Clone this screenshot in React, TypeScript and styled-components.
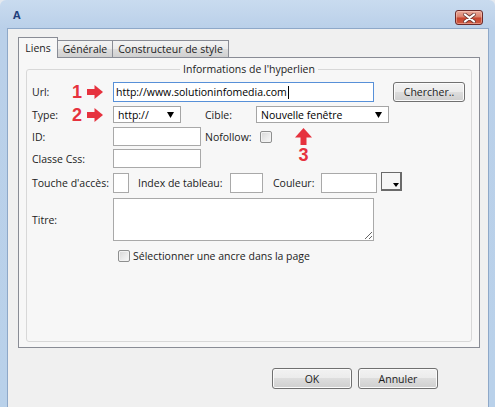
import React from "react";
import styled, { createGlobalStyle, css } from "styled-components";

const GlobalStyle = createGlobalStyle`
  *, *::before, *::after { box-sizing: border-box; }
  html, body { margin: 0; padding: 0; background: #e4e9ef; }
  body {
    font-family: "Open Sans", "Noto Sans", "DejaVu Sans", sans-serif;
    font-size: 10.5px;
    color: #1c1c1c;
  }
  #root { width: 495px; height: 407px; }
`;

const RED = "#e6323e";

const Window = styled.div`
  width: 495px;
  height: 407px;
  display: flex;
  flex-direction: column;
  background: linear-gradient(180deg, #c9dbef 0px, #bad0e9 28px, #b9d1ea 100%);
  border-radius: 6px 6px 0 0;
  padding: 0 6px 0 7px;
  overflow: hidden;
`;

const TitleBar = styled.div`
  flex: none;
  height: 28px;
  display: flex;
  justify-content: space-between;
  align-items: flex-start;
`;

const Title = styled.span`
  margin: 8px 0 0 6px;
  font-weight: 700;
  font-size: 11px;
  line-height: 14px;
  color: #1f3f7c;
`;

const CloseButton = styled.button`
  margin: 10px 6px 0 0;
  width: 28px;
  height: 15px;
  padding: 0;
  border: 1px solid #6b2a2a;
  border-radius: 3px;
  background: linear-gradient(180deg, #eaa99a 0%, #dc8672 42%, #c8452f 56%, #d05b43 100%);
  box-shadow: inset 0 0 0 1px rgba(255, 215, 205, 0.45);
  display: flex;
  align-items: center;
  justify-content: center;
`;

const Client = styled.div`
  flex: 1;
  background: #f0f0f0;
  border: 1px solid #8ea8c8;
  border-bottom: none;
  padding: 8px 8px 0 10px;
  display: flex;
  flex-direction: column;
`;

const TabList = styled.div`
  display: flex;
  align-items: flex-end;
  height: 21px;
  margin-bottom: -1px;
  position: relative;
  z-index: 1;
`;

const Tab = styled.div<{ $active?: boolean; $w: number }>`
  width: ${(p) => p.$w}px;
  text-align: center;
  line-height: 16px;
  white-space: nowrap;
  border: 1px solid #898c95;
  ${(p) =>
    p.$active
      ? css`
          height: 21px;
          border-bottom: none;
          background: #f7f7f7;
          padding-top: 2px;
          position: relative;
          z-index: 2;
        `
      : css`
          height: 18px;
          margin-left: -1px;
          background: linear-gradient(180deg, #f3f3f3 0%, #ebebeb 50%, #dddddd 51%, #d0d0d0 100%);
        `}
`;

const Panel = styled.div`
  height: 291px;
  border: 1px solid #898c95;
  background: #f7f7f7;
  padding: 4px 7px 0 7px;
`;

const Group = styled.fieldset`
  margin: 0;
  height: 280px;
  min-width: 0;
  border: 1px solid #d8d8d8;
  border-radius: 3px;
  padding: 6px 5px 0 5px;
  display: flex;
  flex-direction: column;
`;

const Legend = styled.legend`
  margin: 0 auto;
  padding: 0 3px;
  line-height: 14px;
`;

const Row = styled.div<{ $mt: number; $h: number; $indent?: number }>`
  display: flex;
  align-items: center;
  height: ${(p) => p.$h}px;
  margin-top: ${(p) => p.$mt}px;
  padding-left: ${(p) => p.$indent ?? 0}px;
`;

const LabelCell = styled.div`
  width: 81px;
  flex: none;
  display: flex;
  align-items: center;
  white-space: nowrap;
`;

const LabelText = styled.span<{ $w?: number }>`
  flex: none;
  width: ${(p) => (p.$w ? `${p.$w}px` : "auto")};
  white-space: nowrap;
`;

const InlineLabel = styled.span<{ $w: number; $ml: number }>`
  flex: none;
  width: ${(p) => p.$w}px;
  margin-left: ${(p) => p.$ml}px;
  white-space: nowrap;
`;

const Num = styled.span`
  width: 14px;
  flex: none;
  text-align: center;
  font-family: "Liberation Sans", Arial, sans-serif;
  font-weight: 700;
  font-size: 18px;
  line-height: 18px;
  color: ${RED};
`;

const TextInput = styled.input<{ $w: number }>`
  width: ${(p) => p.$w}px;
  height: 100%;
  flex: none;
  margin: 0;
  border: 1px solid #a9a9a9;
  background: #fff;
  padding: 0 3px;
  font: inherit;
  outline: none;
`;

const UrlField = styled.div`
  width: 261px;
  height: 100%;
  flex: none;
  border: 1px solid #5790d8;
  background: #fff;
  display: flex;
  align-items: center;
  padding: 0 2px;
  white-space: nowrap;
  color: #000;
`;

const Caret = styled.span`
  display: inline-block;
  width: 1px;
  height: 13px;
  margin-left: 1px;
  background: #000;
`;

const Button = styled.button<{ $w: number; $ml?: number }>`
  width: ${(p) => p.$w}px;
  height: 100%;
  flex: none;
  margin: 0 0 0 ${(p) => p.$ml ?? 0}px;
  padding: 0;
  border: 1px solid #707070;
  border-radius: 3px;
  background: linear-gradient(180deg, #f2f2f2 0%, #ebebeb 49%, #dddddd 50%, #cfcfcf 100%);
  box-shadow: inset 0 0 0 1px #fbfbfb;
  font: inherit;
  color: #1c1c1c;
`;

const Combo = styled.div<{ $w: number; $ml?: number }>`
  position: relative;
  width: ${(p) => p.$w}px;
  height: 100%;
  flex: none;
  margin-left: ${(p) => p.$ml ?? 0}px;
  border: 1px solid #a5a5a5;
  background: #fff;
  display: flex;
  align-items: center;
  justify-content: space-between;
  padding: 0 6px 0 4px;
  color: #000;
  white-space: nowrap;
`;

const Check = styled.span<{ $ml?: number }>`
  flex: none;
  width: 12px;
  height: 12px;
  margin-left: ${(p) => p.$ml ?? 0}px;
  border: 1px solid #8e8f8f;
  border-radius: 2px;
  background: linear-gradient(135deg, #d6d6d6 0%, #ececec 60%, #f7f7f7 100%);
  box-shadow: inset 0 0 0 1px #f2f2f2;
`;

const CheckText = styled.span`
  margin-left: 3px;
  white-space: nowrap;
`;

const ColorButton = styled.div`
  flex: none;
  width: 21px;
  height: 19px;
  margin: -1px 0 0 4px;
  align-self: flex-start;
  border: 1px solid #6a6a6a;
  border-right-width: 2px;
  border-bottom-width: 2px;
  background: #f6f6f6;
  display: flex;
  align-items: flex-end;
  justify-content: flex-end;
  padding: 0 1px 2px 0;
`;

const TextArea = styled.textarea`
  width: 261px;
  height: 43px;
  flex: none;
  margin: 0;
  border: 1px solid #a9a9a9;
  background: #fff;
  font: inherit;
  padding: 2px 3px;
  outline: none;
`;

const Annotation = styled.div`
  position: absolute;
  left: 38px;
  top: 21px;
  display: flex;
  flex-direction: column;
  align-items: center;
`;

const AnnotationNum = styled(Num)`
  width: auto;
  margin-top: 1px;
`;

const Footer = styled.div`
  display: flex;
  justify-content: flex-end;
  gap: 6px;
  height: 41px;
  padding: 20px 42px 0 0;
`;

const Triangle = () => (
  <svg width="7" height="6" viewBox="0 0 7 6">
    <polygon points="0,0 7,0 3.5,6" fill="#000" />
  </svg>
);

const RightArrow = () => (
  <svg width="16" height="14" viewBox="0 0 16 14" style={{ marginLeft: 3, flex: "none" }}>
    <rect x="0" y="4" width="8.5" height="6" fill={RED} />
    <polygon points="7.5,0 16,7 7.5,14" fill={RED} />
  </svg>
);

const UpArrow = () => (
  <svg width="17" height="17" viewBox="0 0 17 17">
    <polygon points="8.5,0 17,9.5 0,9.5" fill={RED} />
    <rect x="5.5" y="9" width="6" height="8" fill={RED} />
  </svg>
);

const CloseIcon = () => (
  <svg width="13" height="10" viewBox="0 0 13 10">
    <path d="M2 1.5 L11 8.5 M11 1.5 L2 8.5" stroke="#6a3a36" strokeWidth="3.6" strokeLinecap="round" />
    <path d="M2 1.5 L11 8.5 M11 1.5 L2 8.5" stroke="#ffffff" strokeWidth="2.2" strokeLinecap="round" />
  </svg>
);

export default function App() {
  return (
    <>
      <GlobalStyle />
      <Window>
        <TitleBar>
          <Title>A</Title>
          <CloseButton aria-label="Fermer">
            <CloseIcon />
          </CloseButton>
        </TitleBar>
        <Client>
          <TabList>
            <Tab $active $w={40}>Liens</Tab>
            <Tab $w={56}>Générale</Tab>
            <Tab $w={117}>Constructeur de style</Tab>
          </TabList>
          <Panel>
            <Group>
              <Legend>Informations de l'hyperlien</Legend>

              <Row $mt={0} $h={20}>
                <LabelCell>
                  <LabelText $w={38}>Url:</LabelText>
                  <Num>1</Num>
                  <RightArrow />
                </LabelCell>
                <UrlField role="textbox">
                  http://www.solutioninfomedia.com
                  <Caret />
                </UrlField>
                <Button $w={72} $ml={19}>Chercher..</Button>
              </Row>

              <Row $mt={4} $h={17}>
                <LabelCell>
                  <LabelText $w={38}>Type:</LabelText>
                  <Num>2</Num>
                  <RightArrow />
                </LabelCell>
                <Combo $w={68}>
                  <span>http://</span>
                  <Triangle />
                </Combo>
                <InlineLabel $w={51} $ml={24}>Cible:</InlineLabel>
                <Combo $w={133}>
                  <span>Nouvelle fenêtre</span>
                  <Triangle />
                  <Annotation>
                    <UpArrow />
                    <AnnotationNum>3</AnnotationNum>
                  </Annotation>
                </Combo>
              </Row>

              <Row $mt={4} $h={19}>
                <LabelCell>ID:</LabelCell>
                <TextInput $w={88} />
                <InlineLabel $w={55} $ml={4}>Nofollow:</InlineLabel>
                <Check />
              </Row>

              <Row $mt={3} $h={19}>
                <LabelCell>Classe Css:</LabelCell>
                <TextInput $w={88} />
              </Row>

              <Row $mt={5} $h={20}>
                <LabelCell>Touche d'accès:</LabelCell>
                <TextInput $w={16} />
                <InlineLabel $w={92} $ml={9}>Index de tableau:</InlineLabel>
                <TextInput $w={33} />
                <InlineLabel $w={48} $ml={10}>Couleur:</InlineLabel>
                <TextInput $w={56} />
                <ColorButton>
                  <svg width="6" height="4" viewBox="0 0 6 4">
                    <polygon points="0,0 6,0 3,4" fill="#000" />
                  </svg>
                </ColorButton>
              </Row>

              <Row $mt={5} $h={43}>
                <LabelCell>Titre:</LabelCell>
                <TextArea />
              </Row>

              <Row $mt={9} $h={12} $indent={86}>
                <Check />
                <CheckText>Sélectionner une ancre dans la page</CheckText>
              </Row>
            </Group>
          </Panel>
          <Footer>
            <Button $w={80}>OK</Button>
            <Button $w={80}>Annuler</Button>
          </Footer>
        </Client>
      </Window>
    </>
  );
}
